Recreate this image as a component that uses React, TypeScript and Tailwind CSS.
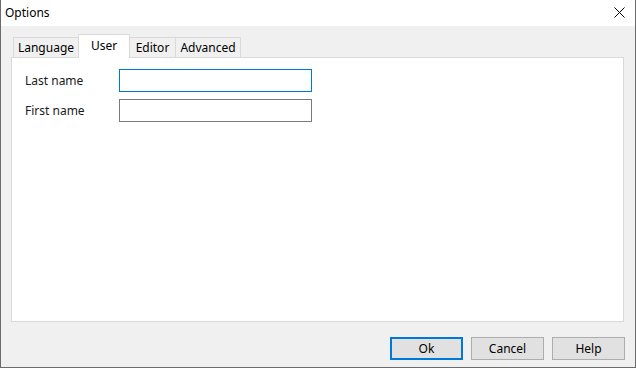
import React from 'react';

const font = { fontFamily: '"Noto Sans", "Open Sans", sans-serif' };

const Tab: React.FC<{ label: string; active?: boolean; className?: string }> = ({ label, active, className }) => (
  <div
    className={
      active
        ? `relative z-10 -mb-px flex h-[24px] items-start justify-center border-x border-t border-[#d9d9d9] bg-white pt-[5px] ${className}`
        : `flex h-[20px] items-center justify-center border-t border-[#d9d9d9] bg-[#f0f0f0] ${className}`
    }
  >
    <span className="text-[12px] leading-none text-black">{label}</span>
  </div>
);

const Field: React.FC<{ label: string; focused?: boolean }> = ({ label, focused }) => (
  <div className="flex h-[23px] items-center">
    <span className="w-[94px] text-[12px] text-[#1a1a1a]">{label}</span>
    <input
      readOnly
      className={
        focused
          ? 'h-[23px] w-[193px] border border-solid border-[#0078d7] bg-white outline-none'
          : 'h-[23px] w-[193px] border border-solid border-[#7a7a7a] bg-white outline-none'
      }
    />
  </div>
);

const Button: React.FC<{ label: string; primary?: boolean }> = ({ label, primary }) => (
  <button
    className={
      primary
        ? 'flex h-[23px] w-[73px] items-center justify-center border-2 border-solid border-[#0078d7] bg-[#e1e1e1] text-[12px] text-black'
        : 'flex h-[23px] w-[73px] items-center justify-center border border-solid border-[#adadad] bg-[#e1e1e1] text-[12px] text-black'
    }
  >
    {label}
  </button>
);

export default function App() {
  return (
    <div
      className="flex h-[368px] w-[636px] flex-col border-x border-b border-[#6b6b6b] bg-[#f0f0f0]"
      style={font}
    >
      {/* title bar */}
      <div className="flex h-[26px] items-center justify-between bg-white pl-[4px] pr-[10px]">
        <span className="text-[12px] text-black">Options</span>
        <svg width="11" height="11" viewBox="0 0 11 11" className="mb-[1px]">
          <path d="M0.5 0.5 L10.5 10.5 M10.5 0.5 L0.5 10.5" stroke="#000" strokeWidth="1" />
        </svg>
      </div>

      <div className="flex flex-1 flex-col px-[10px] pt-[8px] pb-[7px]">
        {/* tabs */}
        <div className="flex h-[23px] items-end pl-[2px]">
          <Tab label="Language" className="w-[65px] border-l" />
          <Tab label="User" active className="w-[52px]" />
          <Tab label="Editor" className="w-[46px] border-r" />
          <Tab label="Advanced" className="w-[65px] border-r" />
        </div>

        {/* panel */}
        <div className="mr-px flex flex-1 flex-col gap-[7px] border border-[#d9d9d9] bg-white pl-[13px] pt-[11px]">
          <Field label="Last name" focused />
          <Field label="First name" />
        </div>

        {/* buttons */}
        <div className="mt-[15px] flex justify-end gap-[8px]">
          <Button label="Ok" primary />
          <Button label="Cancel" />
          <Button label="Help" />
        </div>
      </div>
    </div>
  );
}
